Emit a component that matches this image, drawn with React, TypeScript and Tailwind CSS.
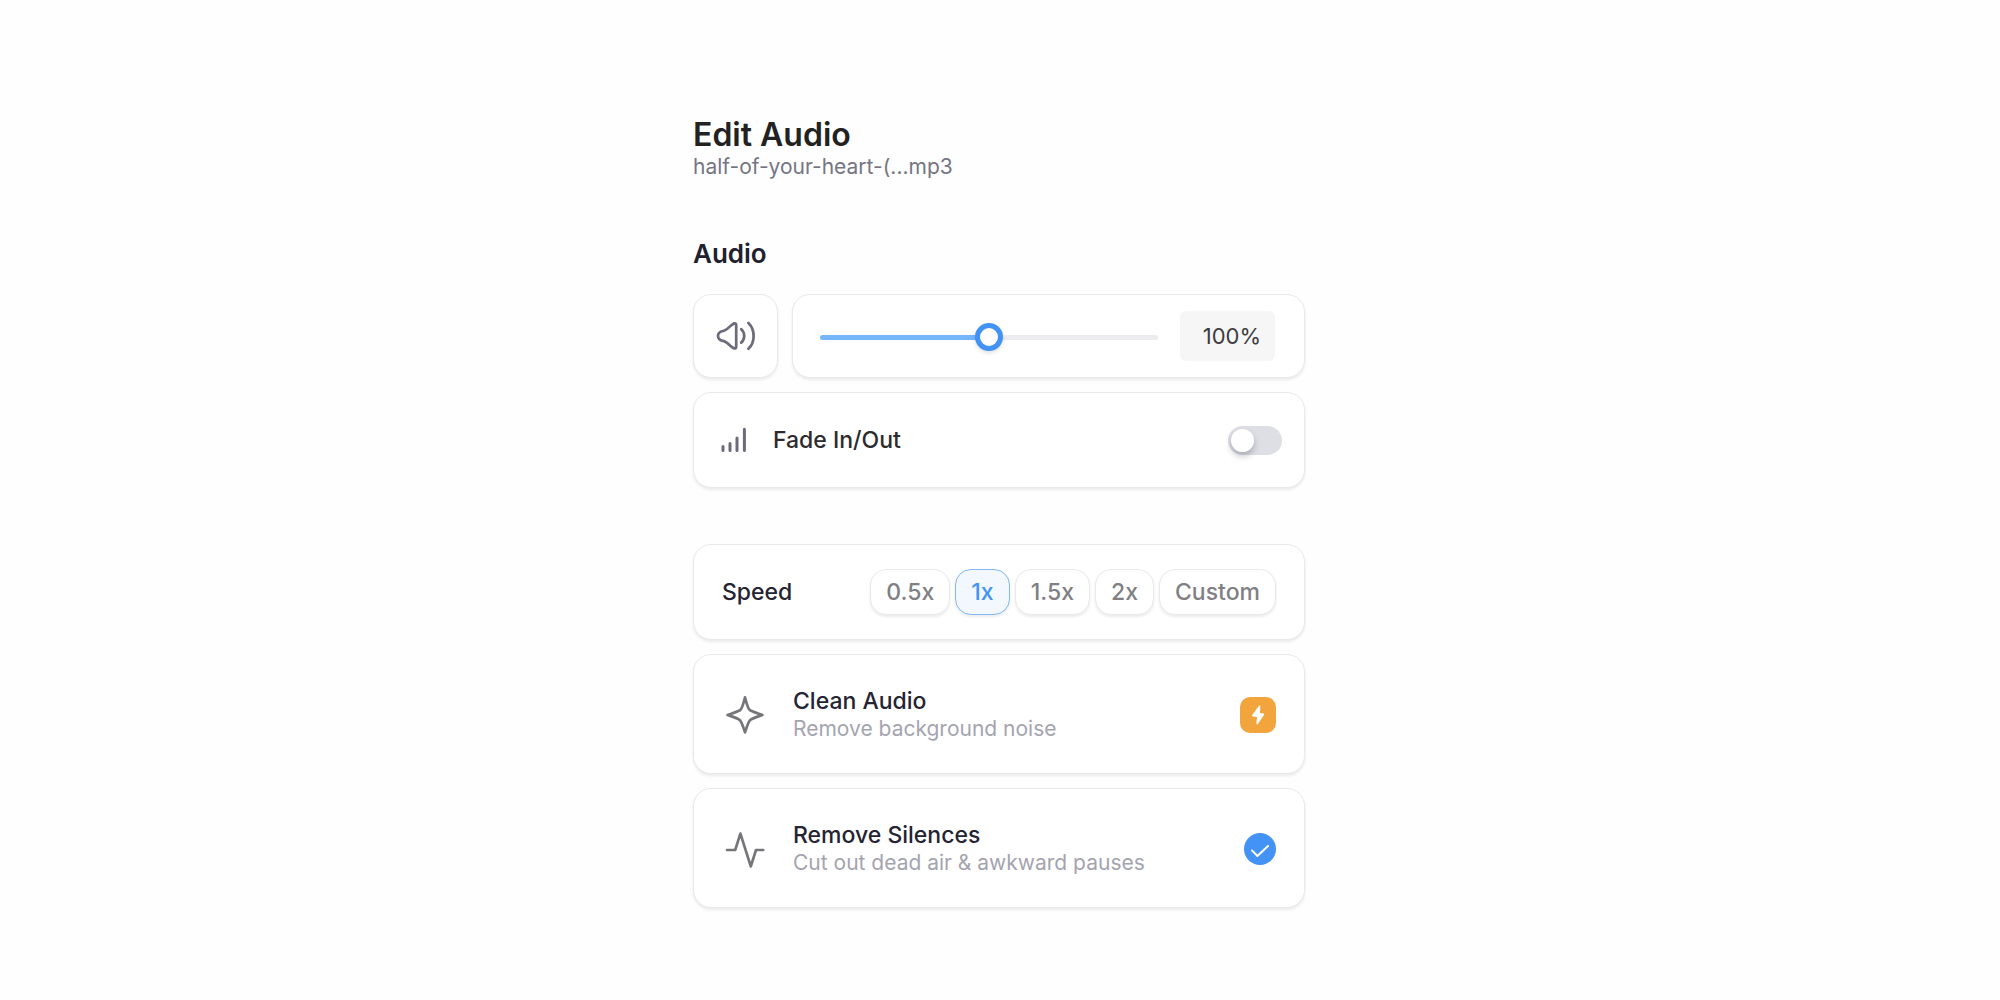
import { useState } from "react";
import type { ReactNode } from "react";

const cardClass =
  "rounded-[18px] border border-[#e9e9eb] bg-white shadow-[0_2px_3px_rgba(0,0,0,0.08)]";

const speeds = ["0.5x", "1x", "1.5x", "2x", "Custom"];

function SpeakerIcon() {
  return (
    <svg width="40" height="30" viewBox="0 0 40 30" fill="none" stroke="#6b6b7b" strokeWidth="2.7" strokeLinecap="round" strokeLinejoin="round" aria-hidden="true">
      <path d="M7 10 C9.4 9.6 11.5 7.8 14 5.4 C15.6 3.9 17 2.8 18.3 2.4 C19.7 2.1 20.2 2.8 20.2 4 V25.8 C20.2 27 19.7 27.7 18.3 27.4 C17 27 15.6 25.9 14 24.4 C11.5 22 9.4 20.2 7 19.8 C3.8 19.2 2 17.4 2 14.9 C2 12.4 3.8 10.6 7 10 Z" />
      <path d="M25.2 8.2 C29.2 11.6 29.2 18.2 25.2 21.6" />
      <path d="M32.4 2 C39.4 8.8 39.4 21 32.4 27.8" />
    </svg>
  );
}

function BarsIcon() {
  return (
    <svg width="28" height="28" viewBox="0 0 28 28" fill="none" stroke="#6b6b7b" strokeWidth="3" strokeLinecap="round" aria-hidden="true">
      <path d="M3 20.5 V24.5 M10 17.5 V24.5 M17 12 V24.5 M24.4 3.2 V24.5" />
    </svg>
  );
}

function SparkIcon() {
  return (
    <svg width="40" height="40" viewBox="0 0 40 40" fill="none" stroke="#76767a" strokeWidth="2.7" strokeLinejoin="round" aria-hidden="true">
      <path d="M20 2.4 C21.6 8.6 23 14.2 25 15.2 C28.6 17 33 18.4 37.4 20 C33 21.6 28.6 22.8 25.4 24.8 C23.4 26.2 21.8 31.8 20 37.4 C18.2 31.8 16.6 26.2 14.6 24.8 C11.4 22.8 7 21.6 2.6 20 C7 18.4 11.4 17 15 15.2 C17 14.2 18.4 8.6 20 2.4 Z" />
    </svg>
  );
}

function PulseIcon() {
  return (
    <svg width="40" height="40" viewBox="0 0 40 40" fill="none" stroke="#76767a" strokeWidth="2.7" strokeLinecap="round" strokeLinejoin="round" aria-hidden="true">
      <path d="M2 21 H10.2 L15.4 4.6 L25.8 37.4 L31 21 H38.2" />
    </svg>
  );
}

function OptionCard({ icon, title, text, badge }: { icon: ReactNode; title: string; text: string; badge: ReactNode }) {
  return (
    <button type="button" className={`${cardClass} flex h-[120px] w-full items-center pt-0.5 pr-7 pl-[31px] text-left`}>
      {icon}
      <span className="ml-7 flex flex-1 flex-col">
        <span className="text-[23px] leading-7 font-medium text-[#242432]">{title}</span>
        <span className="text-[21px] leading-7 text-[#a4a4b0]">{text}</span>
      </span>
      {badge}
    </button>
  );
}

export default function App() {
  const [volume, setVolume] = useState(100);
  const [fade, setFade] = useState(false);
  const [speed, setSpeed] = useState("1x");
  const filled = volume / 2;

  return (
    <main className="flex min-h-screen flex-col items-center bg-[#fefefe] pt-[115px] pr-[18px] pb-20 pl-4 font-['Inter',sans-serif]">
      <div className="w-full max-w-[612px]">
        <header>
          <h1 className="text-[32px] leading-10 font-semibold text-[#222223]">Edit Audio</h1>
          <p className="text-[21px] leading-6 text-[#757582]">half-of-your-heart-(...mp3</p>
        </header>

        <h2 className="mt-[58px] text-[26px] leading-[34px] font-semibold text-[#20202f]">Audio</h2>

        <section className="mt-[23px] flex flex-col gap-[14px]" aria-label="Volume">
          <div className="flex gap-[14px]">
            <button type="button" aria-label="Mute" className={`${cardClass} flex h-[84px] w-[85px] shrink-0 items-center justify-center`}>
              <SpeakerIcon />
            </button>
            <div className={`${cardClass} flex h-[84px] flex-1 items-center pr-[29px] pl-[27px]`}>
              <input
                type="range"
                min={0}
                max={200}
                value={volume}
                onChange={(e) => setVolume(Number(e.target.value))}
                aria-label="Volume level"
                style={{ backgroundImage: `linear-gradient(to right, #75b5fa ${filled}%, #ececee ${filled}%)` }}
                className="mt-0.5 h-[5px] min-w-0 flex-1 appearance-none rounded-full [&::-webkit-slider-thumb]:size-7 [&::-webkit-slider-thumb]:appearance-none [&::-webkit-slider-thumb]:rounded-full [&::-webkit-slider-thumb]:border-[5px] [&::-webkit-slider-thumb]:border-solid [&::-webkit-slider-thumb]:border-[#4293f5] [&::-webkit-slider-thumb]:bg-white [&::-webkit-slider-thumb]:shadow-[0_2px_4px_rgba(0,0,0,0.12)]"
              />
              <input
                type="text"
                readOnly
                value={`${volume}%`}
                aria-label="Volume percentage"
                className="ml-[22px] h-[50px] w-[95px] rounded-md bg-[#f6f6f7] pr-[14px] text-right text-[22px] text-[#3c3c3e]"
              />
            </div>
          </div>

          <div className={`${cardClass} flex h-24 items-center pr-[22px] pl-[26px]`}>
            <BarsIcon />
            <span id="fade-label" className="ml-[25px] flex-1 text-[23px] leading-7 font-medium text-[#2c2c2e]">Fade In/Out</span>
            <button
              type="button"
              role="switch"
              aria-checked={fade}
              aria-labelledby="fade-label"
              onClick={() => setFade(!fade)}
              className={`flex h-[29px] w-[54px] items-center rounded-full px-[3px] ${fade ? "justify-end bg-[#4293f5]" : "bg-[#dedee5]"}`}
            >
              <span className="size-[23px] rounded-full bg-white shadow-[0_4px_6px_rgba(60,60,90,0.3)]" />
            </button>
          </div>
        </section>

        <section className="mt-14 flex flex-col gap-[14px]" aria-label="Effects">
          <div className={`${cardClass} flex h-24 items-center justify-between pr-7 pl-7`}>
            <span id="speed-label" className="text-[23px] leading-7 font-medium text-[#242432]">Speed</span>
            <div role="group" aria-labelledby="speed-label" className="flex gap-[5px]">
              {speeds.map((s) => (
                <button
                  key={s}
                  type="button"
                  aria-pressed={s === speed}
                  onClick={() => setSpeed(s)}
                  className={`h-[46px] rounded-2xl border px-[15px] text-[23px] font-medium shadow-[0_2px_3px_rgba(0,0,0,0.08)] ${s === speed ? "border-[#82b8f5] bg-[#f2f8fe] text-[#4293f5]" : "border-[#e9e9eb] bg-white text-[#808084]"}`}
                >
                  {s}
                </button>
              ))}
            </div>
          </div>

          <OptionCard
            icon={<SparkIcon />}
            title="Clean Audio"
            text="Remove background noise"
            badge={
              <span className="flex size-9 items-center justify-center rounded-[10px] bg-[#f2a53c]">
                <svg width="14" height="20" viewBox="0 0 14 20" fill="#fff" aria-hidden="true">
                  <path d="M7.6 1.2 L1.2 10 C0.8 10.8 1 11.4 1.8 11.5 L6 12 L5.4 18.4 C5.4 19.5 6.3 19.7 6.9 18.9 L13 10 C13.5 9.2 13.2 8.5 12.4 8.4 L8.9 8 L9.4 1.6 C9.4 0.4 8.3 0.2 7.6 1.2 Z" />
                </svg>
              </span>
            }
          />
          <OptionCard
            icon={<PulseIcon />}
            title="Remove Silences"
            text="Cut out dead air & awkward pauses"
            badge={
              <span className="flex size-8 items-center justify-center rounded-full bg-[#4293f5]">
                <svg width="20" height="16" viewBox="0 0 20 16" fill="none" stroke="#fff" strokeWidth="2" strokeLinecap="round" strokeLinejoin="round" aria-hidden="true">
                  <path d="M2 9.4 L7.4 15 L18 5" />
                </svg>
              </span>
            }
          />
        </section>
      </div>
    </main>
  );
}
